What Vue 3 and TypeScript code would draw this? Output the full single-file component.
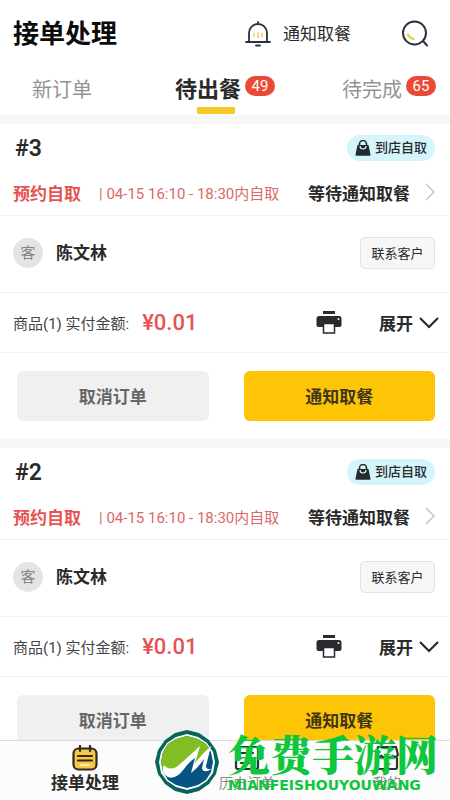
<script setup lang="ts">
import { ref } from 'vue'

interface Tab { label: string; count?: number }
interface Order { id: number; time: string; customer: string; items: number; paid: string }

const tabs: Tab[] = [
  { label: '新订单' },
  { label: '待出餐', count: 49 },
  { label: '待完成', count: 65 },
]
const activeTab = ref(1)

const orders: Order[] = [
  { id: 3, time: '04-15 16:10 - 18:30内自取', customer: '陈文林', items: 1, paid: '¥0.01' },
  { id: 2, time: '04-15 16:10 - 18:30内自取', customer: '陈文林', items: 1, paid: '¥0.01' },
]
</script>

<template>
  <div class="app">
    <header class="header">
      <h1>接单处理</h1>
      <button class="notify" type="button">
        <svg width="26" height="26" viewBox="0 0 26 26" fill="none" stroke="#2b3140" stroke-width="1.8" stroke-linecap="round">
          <path d="M4 21V12a9 9 0 0 1 18 0v9M1 21h24M11 24.500h4M13 1v2" />
          <path d="M9 12.500v3M13 11.500v5M17 12.500v3" stroke="#ecd06a" stroke-width="1.500" />
        </svg>
        <span>通知取餐</span>
      </button>
      <button class="search" type="button" aria-label="搜索">
        <svg width="28" height="28" viewBox="0 0 28 28" fill="none" stroke="#2b3140" stroke-width="2" stroke-linecap="round">
          <circle cx="13.500" cy="13" r="11.500" />
          <path d="M22 21l4 4.500" />
          <path d="M7 14.500q2 4 5.500 4.500" stroke="#e6d04f" stroke-width="2.400" />
        </svg>
      </button>
    </header>

    <nav class="tabs">
      <button v-for="(tab, i) in tabs" :key="tab.label" type="button" class="tab" :class="{ active: i === activeTab }" @click="activeTab = i">
        <span class="tab-label">{{ tab.label }}</span>
        <span v-if="tab.count" class="badge">{{ tab.count }}</span>
      </button>
    </nav>

    <main class="orders">
      <article v-for="order in orders" :key="order.id" class="order">
        <div class="row title-row">
          <h2>#{{ order.id }}</h2>
          <span class="pickup">
            <svg width="16" height="16" viewBox="0 0 16 16">
              <path d="M2.500 5h11l2 9.500a1 1 0 0 1-1 1.200h-13a1 1 0 0 1-1-1.200z" fill="#242b2e" />
              <path d="M4.500 6V4a3.500 3.500 0 0 1 7 0v2" fill="none" stroke="#242b2e" stroke-width="1.600" />
              <path d="M5 6a3 3 0 0 0 6 0" fill="none" stroke="#d5f5fc" stroke-width="1.200" />
            </svg>
            到店自取
          </span>
        </div>
        <div class="row status-row">
          <strong class="reserve">预约自取</strong>
          <span class="time">| {{ order.time }}</span>
          <a class="status" href="#">
            等待通知取餐
            <svg width="10" height="18" viewBox="0 0 10 18" fill="none" stroke="#c4c4c4" stroke-width="1.500"><path d="M1 1l8 8-8 8" /></svg>
          </a>
        </div>
        <div class="row customer-row">
          <span class="avatar">客</span>
          <strong class="customer">{{ order.customer }}</strong>
          <button class="contact" type="button">联系客户</button>
        </div>
        <div class="row amount-row">
          <span class="amount-label">商品({{ order.items }}) 实付金额:</span>
          <strong class="price">{{ order.paid }}</strong>
          <button class="print" type="button" aria-label="打印">
            <svg width="26" height="24" viewBox="0 0 26 24">
              <path d="M7 0h12v3H7z" fill="#2a2b2e" />
              <path d="M3 5h20a2.500 2.500 0 0 1 2.500 2.500V14a2 2 0 0 1-2 2H2.500a2 2 0 0 1-2-2V7.500A2.500 2.500 0 0 1 3 5z" fill="#2a2b2e" />
              <path d="M7.500 12.500h11V22h-11z" fill="#fff" stroke="#2a2b2e" stroke-width="1.500" />
              <circle cx="22.500" cy="8" r="1" fill="#fff" />
            </svg>
          </button>
          <button class="expand" type="button">
            展开
            <svg width="20" height="12" viewBox="0 0 20 12" fill="none" stroke="#2a2a2a" stroke-width="2.200"><path d="M1 1l9 9 9-9" /></svg>
          </button>
        </div>
        <div class="actions">
          <button class="action cancel" type="button">取消订单</button>
          <button class="action confirm" type="button">通知取餐</button>
        </div>
      </article>
    </main>

    <footer class="bottom">
      <a class="nav-item current" href="#">
        <svg width="26" height="26" viewBox="0 0 26 26" fill="none" stroke="#33291c" stroke-width="2.200" stroke-linecap="round">
          <rect x="1.500" y="3.500" width="23" height="21" rx="5" fill="#f6c944" />
          <path d="M8 1v5M18 1v5M6 11h14M6 15.500h14" />
          <path d="M9 20h8" stroke="#fff0a6" />
        </svg>
        <span>接单处理</span>
      </a>
      <a class="nav-item" href="#">
        <svg width="26" height="26" viewBox="0 0 26 26" fill="none" stroke="#2b3140" stroke-width="2.200" stroke-linecap="round">
          <rect x="2" y="2" width="22" height="22" rx="2" />
          <path d="M7 8h12M7 18h8" />
          <path d="M7 13h10" stroke="#e6d04f" />
        </svg>
        <span>历史订单</span>
      </a>
      <a class="nav-item" href="#">
        <svg width="26" height="26" viewBox="0 0 26 26" fill="none" stroke="#2b3140" stroke-width="2.200" stroke-linecap="round">
          <path d="M3 13v9a2 2 0 0 0 2 2h16a2 2 0 0 0 2-2v-9M4 2h18l2 8q-2 3-5.500 1-2.500 3-5.500 0-3 3-5.500 0Q4 13 2 10z" />
          <path d="M11 19h5" stroke="#edae49" />
        </svg>
        <span>我的</span>
      </a>
    </footer>

    <div class="watermark">
      <svg width="68" height="66" viewBox="0 0 68 66">
        <path d="M34 1l12 3 10 7 7 10 3 12-3 12-7 10-10 7-12 3-12-3-10-7-7-10-3-12 3-12 7-10 10-7z" fill="#07665a" />
        <path d="M34 5l11 3 9 6 6 9 2 10-2 11-6 8-9 6-11 3-11-3-9-6-6-8-2-11 2-10 6-9 9-6z" fill="#fff" />
        <path d="M34 7l11 3 8 5 5 8 2 10-2 10-5 8-8 5-11 3-11-3-8-5-5-8-2-10 2-10 5-8 8-5z" fill="#075483" />
        <path d="M34 7l11 3 8 5 4 5-14 14-2-9-13 13-10 9-8-4-2-10 2-10 5-8 8-5z" fill="#82bd22" />
        <path d="M10 38q2-3 3 0 6 4 13-2Q36 27 47 17l-5 17q8-10 16-17l-5 20q0 4 6 3-9 5-10-1l2-9q-6 9-13 14l4-15q-6 4-11 11-8 11-16 8-6-3-5-10z" fill="#fff" />
      </svg>
      <div class="watermark-text">
        <span class="watermark-name">免费手游网</span>
        <span class="watermark-latin">MIANFEISHOUYOUWANG</span>
      </div>
    </div>
  </div>
</template>

<style>
body { background: #fff; }
</style>

<style scoped>
.app {
  position: relative;
  display: flex;
  flex-direction: column;
  height: 100vh;
  overflow: hidden;
  background: #fff;
  color: #2a2a2a;
  font-family: Roboto, "Noto Sans CJK SC", sans-serif;
}
.app * { box-sizing: border-box; }
button { padding: 0; border: 0; background: none; color: inherit; font: inherit; cursor: pointer; }
a { color: inherit; text-decoration: none; }
h1, h2 { margin: 0; }
svg { display: block; flex: none; }

.header { display: flex; align-items: center; height: 66px; flex: none; padding: 2px 21px 0 13px; }
h1 { font-size: 26px; line-height: 36px; font-weight: 700; color: #0c0c0c; }
.notify { display: flex; align-items: center; gap: 12px; margin-left: auto; font-size: 17px; line-height: 24px; }
.search { margin-left: 50px; }

.tabs { display: grid; grid-template-columns: 143fr 167fr auto; flex: none; height: 49px; padding: 0 14px 0 32px; }
.tab { position: relative; display: flex; align-items: flex-start; color: #929292; font-size: 20px; line-height: 48px; }
.tab.active { color: #2a2a2a; font-size: 22px; font-weight: 700; }
.tab.active::after { content: ""; position: absolute; left: 22px; bottom: 1px; width: 38px; height: 7px; border-radius: 1px; background: #f6c927; }
.badge { margin: 10px 0 0 4px; width: 30px; height: 20px; border-radius: 10px; background: #ea4a35; color: #fff; font-size: 15px; line-height: 20px; font-weight: 400; text-align: center; }

.orders { flex: 1; min-height: 0; overflow: hidden; background: #f7f7f7; padding-top: 9px; }
.order { background: #fff; margin-bottom: 9px; }
.row { display: flex; align-items: center; padding: 0 15px 0 13px; border-bottom: 1px solid #f2f2f2; }
.title-row { height: 48px; padding-left: 15px; border: 0; justify-content: space-between; }
h2 { font-size: 23px; font-weight: 600; }
.pickup { display: flex; align-items: center; gap: 4px; height: 26px; padding: 0 8px; border-radius: 13px; background: #d5f5fc; font-size: 13px; line-height: 24px; font-weight: 500; }
.status-row { height: 44px; padding-bottom: 3px; }
.reserve { color: #e55353; font-size: 17px; font-weight: 700; }
.time { margin-left: 18px; color: #dc6767; font-size: 15px; white-space: nowrap; }
.status { display: flex; align-items: center; gap: 15px; margin-left: auto; font-size: 17px; font-weight: 700; white-space: nowrap; }
.customer-row { height: 77px; padding-bottom: 2px; }
.avatar { width: 30px; height: 30px; border-radius: 50%; background: #e4e4e4; color: #858585; font-size: 15px; line-height: 30px; text-align: center; }
.customer { margin-left: 13px; font-size: 17px; line-height: 30px; font-weight: 700; }
.contact { margin-left: auto; width: 75px; height: 32px; padding-bottom: 2px; border: 1px solid #e2e2e2; border-radius: 5px; background: #f7f7f7; font-size: 13px; }
.amount-row { height: 60px; padding-right: 11px; }
.amount-label { font-size: 15px; color: #444; }
.price { margin-left: 13px; color: #e55353; font-size: 22px; font-weight: 500; }
.print { margin-left: auto; }
.expand { display: flex; align-items: center; gap: 6px; margin-left: 37px; font-size: 17px; font-weight: 700; }
.actions { display: grid; grid-template-columns: 1fr 1fr; gap: 35px; padding: 18px 15px 18px 17px; }
.action { height: 50px; padding-bottom: 1px; border-radius: 6px; font-size: 17px; font-weight: 700; }
.cancel { background: #f0f0f0; color: #666; }
.confirm { background: #fec506; color: #40351b; }

.bottom { display: grid; grid-template-columns: 170fr 154fr 126fr; flex: none; height: 60px; border-top: 1px solid #dcdcdc; background: #fcfcfc; }
.nav-item { display: flex; flex-direction: column; align-items: center; padding-top: 4px; color: #888; font-size: 14px; line-height: 24px; }
.nav-item.current { color: #2a2a2a; font-size: 17px; font-weight: 700; }

.watermark { position: absolute; right: 12px; bottom: 5px; display: flex; align-items: center; gap: 7px; pointer-events: none; }
.watermark-text { display: flex; flex-direction: column; color: #0fc63c; }
.watermark-name { font-family: "Noto Serif CJK SC", "Noto Sans CJK SC", serif; font-size: 42px; line-height: 46px; font-weight: 900; }
.watermark-latin { font-family: "DejaVu Sans", sans-serif; font-size: 14px; line-height: 18px; font-weight: 700; }
</style>
